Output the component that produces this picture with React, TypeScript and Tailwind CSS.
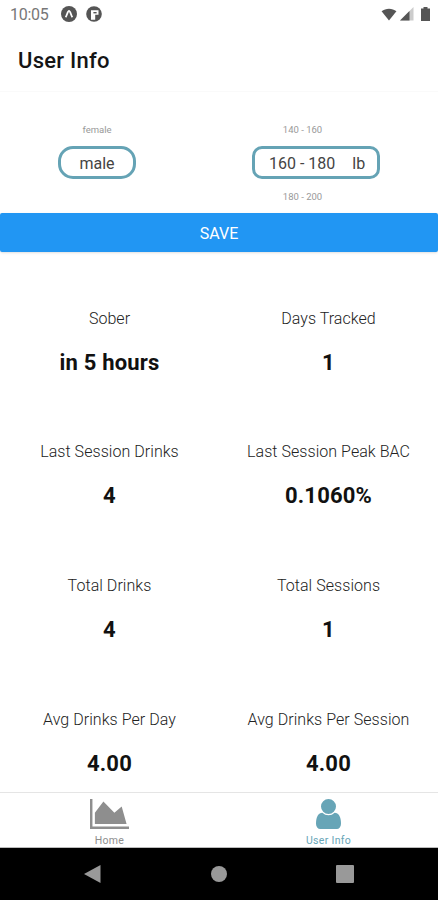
import React from 'react';

interface Stat {
  label: string;
  value: string;
}

const stats: Stat[] = [
  { label: 'Sober', value: 'in 5 hours' },
  { label: 'Days Tracked', value: '1' },
  { label: 'Last Session Drinks', value: '4' },
  { label: 'Last Session Peak BAC', value: '0.1060%' },
  { label: 'Total Drinks', value: '4' },
  { label: 'Total Sessions', value: '1' },
  { label: 'Avg Drinks Per Day', value: '4.00' },
  { label: 'Avg Drinks Per Session', value: '4.00' },
];

const StatusBar: React.FC = () => (
  <div className="flex h-7 items-center pl-[10px] pr-[8px] text-[#777]">
    <span className="w-[51px] pt-[2px] text-[16px] tracking-[-0.3px]">10:05</span>
    <svg className="h-4 w-4" viewBox="0 0 16 16">
      <circle cx="8" cy="8" r="8" fill="#555" />
      <path d="M4.6 11.2C6 9.5 6.6 4.8 8 4.8s2 4.7 3.4 6.4" fill="none" stroke="#fff" strokeWidth="1.8" />
    </svg>
    <svg className="ml-[9px] h-4 w-4" viewBox="0 0 16 16">
      <circle cx="8" cy="8" r="7.8" fill="#555" />
      <path d="M5 4.2h7.5v4.6H9.2v5H5z" fill="#fff" />
      <path d="M7.4 6h3.2v1.4H7.4z" fill="#555" />
    </svg>
    <div className="flex-1" />
    <svg className="h-[13px] w-[16px]" viewBox="0 0 16 14">
      <path d="M0 3.6C4.5-.2 11.5-.2 16 3.6L8 13.5z" fill="#555" />
    </svg>
    <svg className="ml-[3px] h-[14px] w-[14px]" viewBox="0 0 14 14">
      <path d="M13.5 0v13.5H0z" fill="#ccc" />
      <path d="M9.5 4v9.5H0z" fill="#555" />
    </svg>
    <svg className="ml-[7px] h-[14px] w-[9px]" viewBox="0 0 9 14">
      <path d="M2.5 0h4v1.5H9V14H0V1.5h2.5z" fill="#555" />
    </svg>
  </div>
);

const Pickers: React.FC = () => (
  <div className="flex h-[121px] pt-[31px]">
    <div className="flex w-[194px] flex-col items-center">
      <span className="h-[14px] text-[9.5px] leading-[14px] text-[#999]">female</span>
      <div className="mt-[9px] flex h-[33px] w-[78px] items-center justify-center rounded-[15px] border-[3px] border-[#65a3b5] pt-[2px] text-[16px] text-[#444]">
        male
      </div>
    </div>
    <div className="flex w-[244px] flex-col items-center">
      <span className="h-[14px] pr-[27px] text-[9.5px] leading-[14px] text-[#999]">140 - 160</span>
      <div className="mt-[9px] flex h-[33px] w-[128px] items-center gap-[17px] rounded-[10px] border-[3px] border-[#65a3b5] pl-[14px] pt-[2px] text-[16px] text-[#444]">
        <span>160 - 180</span>
        <span>lb</span>
      </div>
      <span className="mt-[11px] h-[14px] pr-[27px] text-[9.5px] leading-[14px] text-[#999]">180 - 200</span>
    </div>
  </div>
);

const TabBar: React.FC = () => (
  <nav className="grid h-14 grid-cols-2 border-t border-b border-t-[#e5e5e5] border-b-[#bbb] pt-[6px] text-[10.5px] leading-[12px] tracking-[0.3px]">
    <div className="flex flex-col items-center text-[#8e8e8e]">
      <svg className="h-[30px] w-[39px]" viewBox="0 128 2048 1536" preserveAspectRatio="none" fill="currentColor">
        <path d="M2048 1536v128H0V128h128v1408zM1664 512l256 896H256V832l448-576 576 576z" />
      </svg>
      <span className="mt-[6px]">Home</span>
    </div>
    <div className="flex flex-col items-center text-[#67a5b7]">
      <svg className="h-[30px] w-[25px]" viewBox="0 128 1280 1536" preserveAspectRatio="none" fill="currentColor">
        <path d="M1280 1399q0 109-62.5 187t-150.5 78h-854q-88 0-150.5-78t-62.5-187q0-85 8.5-160.5t31.5-152 58.5-131 94-89 134.5-34.5q131 128 313 128t313-128q76 0 134.5 34.5t94 89 58.5 131 31.5 152 8.5 160.5zm-256-887q0 159-112.5 271.5t-271.5 112.5-271.5-112.5-112.5-271.5 112.5-271.5 271.5-112.5 271.5 112.5 112.5 271.5z" />
      </svg>
      <span className="mt-[6px]">User Info</span>
    </div>
  </nav>
);

const SystemNav: React.FC = () => (
  <div className="flex h-[52px] items-center justify-between bg-black pl-[84px] pr-[84px] text-[#999]">
    <svg className="h-[18px] w-[17px]" viewBox="0 0 17 18" fill="currentColor">
      <path d="M16.5 0v18L0 9z" />
    </svg>
    <div className="ml-[1px] h-4 w-4 rounded-full bg-[#999]" />
    <div className="h-[18px] w-[18px] rounded-[1px] bg-[#999]" />
  </div>
);

const App: React.FC = () => {
  return (
    <div className="flex h-[900px] w-[438px] flex-col overflow-hidden bg-white font-['Roboto',sans-serif]">
      <StatusBar />
      <header className="flex h-16 items-center border-b border-[#fafafa] pl-[18px]">
        <h1 className="pt-[2px] text-[22px] font-medium tracking-[0.25px] text-[#151515]">User Info</h1>
      </header>
      <Pickers />
      <button className="h-[39px] w-full shrink-0 rounded-[2px] bg-[#2196f3] pt-[2px] text-[16px] text-white shadow-sm">
        SAVE
      </button>
      <main className="grid flex-1 auto-rows-[133.7px] grid-cols-2">
        {stats.map((stat) => (
          <div key={stat.label} className="flex flex-col items-center pt-[56.7px]">
            <span className="text-[16px] font-light leading-5 tracking-[0.05px] text-[#222]">{stat.label}</span>
            <span className="mt-5 text-[22px] font-bold leading-7 tracking-[0.2px] text-[#111]">{stat.value}</span>
          </div>
        ))}
      </main>
      <TabBar />
      <SystemNav />
    </div>
  );
};

export default App;
